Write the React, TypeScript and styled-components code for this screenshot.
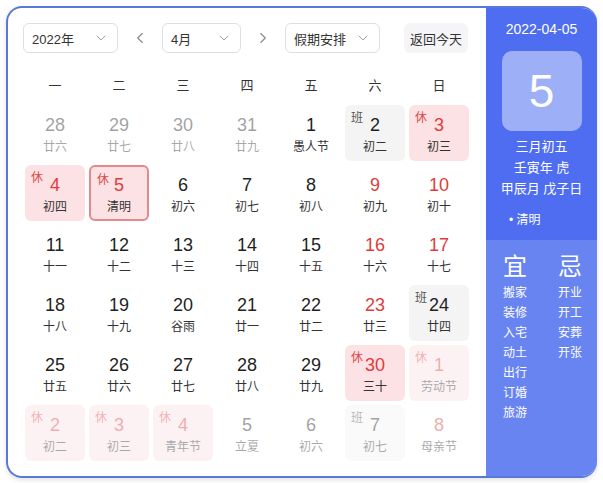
import styled, { createGlobalStyle } from "styled-components";
import { ChevronDown, ChevronLeft, ChevronRight } from "lucide-react";

const GlobalStyle = createGlobalStyle`
  body {
    margin: 0;
    background: #fff;
    font-family: "Liberation Sans", "Noto Sans CJK SC", sans-serif;
  }
`;

const Frame = styled.div`
  margin: 6px;
  width: 589px;
  height: 468px;
  border: 2px solid #5a78d8;
  border-right: none;
  border-radius: 16px;
  overflow: hidden;
  display: flex;
  box-shadow: 0 2px 5px rgba(0, 0, 0, 0.12);
`;

const Main = styled.div`
  width: 478px;
  padding: 15px 15px 0 15px;
  box-sizing: border-box;
`;

const Toolbar = styled.div`
  display: flex;
  align-items: center;
  height: 30px;
  padding-right: 3px;
  margin-bottom: 22px;
`;

const Select = styled.div<{ $w: number }>`
  width: ${(p) => p.$w}px;
  height: 30px;
  box-sizing: border-box;
  border: 1px solid #dcdfe6;
  border-radius: 6px;
  display: flex;
  align-items: center;
  justify-content: space-between;
  padding: 0 8px 0 8px;
  font-size: 13px;
  color: #333;
`;

const ArrowBtn = styled.div`
  width: 44px;
  display: flex;
  justify-content: center;
  color: #888;
`;

const TodayBtn = styled.div`
  margin-left: auto;
  height: 30px;
  padding: 0 6px;
  border-radius: 6px;
  background: #f5f5f7;
  display: flex;
  align-items: center;
  font-size: 13px;
  color: #333;
`;

const Weekdays = styled.div`
  display: grid;
  grid-template-columns: repeat(7, 64px);
  line-height: 22px;
  margin-bottom: 8px;
  font-size: 13px;
  color: #333;
  text-align: center;
`;

const Grid = styled.div`
  display: grid;
  grid-template-columns: repeat(7, 60px);
  grid-auto-rows: 56px;
  gap: 4px;
  margin: 0 2px;
`;

type Kind = "rest" | "work" | "none";

const Cell = styled.div<{ $kind: Kind; $other: boolean; $today: boolean }>`
  position: relative;
  box-sizing: border-box;
  border-radius: 6px;
  text-align: center;
  opacity: ${(p) => (p.$other ? 0.42 : 1)};
  background: ${(p) =>
    p.$kind === "rest" ? "#fce2e4" : p.$kind === "work" ? "#f4f4f5" : "transparent"};
  border: ${(p) => (p.$today ? "2px solid #e3888c" : "none")};
  padding-top: ${(p) => (p.$today ? 7 : 9)}px;
`;

const DayNum = styled.div<{ $red: boolean }>`
  font-size: 18px;
  line-height: 22px;
  color: ${(p) => (p.$red ? "#e03c3c" : "#1f1f1f")};
`;

const Lunar = styled.div`
  margin-top: 3px;
  font-size: 12px;
  line-height: 16px;
  color: #333;
`;

const Tag = styled.span<{ $kind: Kind }>`
  position: absolute;
  top: 3px;
  left: 6px;
  font-size: 12px;
  color: ${(p) => (p.$kind === "rest" ? "#e04848" : "#555")};
`;

const Side = styled.div`
  width: 111px;
  display: flex;
  flex-direction: column;
  color: #fff;
`;

const SideTop = styled.div`
  background: #4e6df1;
  padding-top: 12px;
  height: 232px;
  box-sizing: border-box;
  display: flex;
  flex-direction: column;
  align-items: center;
`;

const DateLine = styled.div`
  font-size: 14px;
  line-height: 18px;
  margin-bottom: 13px;
`;

const BigDay = styled.div`
  width: 80px;
  height: 80px;
  border-radius: 10px;
  background: rgba(255, 255, 255, 0.45);
  display: flex;
  align-items: center;
  justify-content: center;
  font-size: 46px;
  margin-bottom: 5px;
`;

const InfoLine = styled.div`
  font-size: 13px;
  line-height: 21px;
`;

const Term = styled.div`
  align-self: flex-start;
  margin: 11px 0 0 23px;
  font-size: 12px;
  line-height: 20px;
`;

const SideBottom = styled.div`
  flex: 1;
  background: #6784f1;
  padding: 13px 0 0 17px;
  display: flex;
`;

const Column = styled.div`
  width: 55px;
  flex-shrink: 0;
  display: flex;
  flex-direction: column;
`;

const ColTitle = styled.div`
  font-size: 24px;
  line-height: 28px;
  margin-bottom: 2px;
`;

const ColItem = styled.div`
  font-size: 12px;
  line-height: 20px;
`;

type Day = { d: number; l: string; tag?: Kind; other?: boolean; wk?: boolean; today?: boolean };

const rows: Day[][] = [
  [
    { d: 28, l: "廿六", other: true },
    { d: 29, l: "廿七", other: true },
    { d: 30, l: "廿八", other: true },
    { d: 31, l: "廿九", other: true },
    { d: 1, l: "愚人节" },
    { d: 2, l: "初二", tag: "work", wk: true },
    { d: 3, l: "初三", tag: "rest", wk: true },
  ],
  [
    { d: 4, l: "初四", tag: "rest" },
    { d: 5, l: "清明", tag: "rest", today: true },
    { d: 6, l: "初六" },
    { d: 7, l: "初七" },
    { d: 8, l: "初八" },
    { d: 9, l: "初九", wk: true },
    { d: 10, l: "初十", wk: true },
  ],
  [
    { d: 11, l: "十一" },
    { d: 12, l: "十二" },
    { d: 13, l: "十三" },
    { d: 14, l: "十四" },
    { d: 15, l: "十五" },
    { d: 16, l: "十六", wk: true },
    { d: 17, l: "十七", wk: true },
  ],
  [
    { d: 18, l: "十八" },
    { d: 19, l: "十九" },
    { d: 20, l: "谷雨" },
    { d: 21, l: "廿一" },
    { d: 22, l: "廿二" },
    { d: 23, l: "廿三", wk: true },
    { d: 24, l: "廿四", tag: "work", wk: true },
  ],
  [
    { d: 25, l: "廿五" },
    { d: 26, l: "廿六" },
    { d: 27, l: "廿七" },
    { d: 28, l: "廿八" },
    { d: 29, l: "廿九" },
    { d: 30, l: "三十", tag: "rest", wk: true },
    { d: 1, l: "劳动节", tag: "rest", wk: true, other: true },
  ],
  [
    { d: 2, l: "初二", tag: "rest", other: true },
    { d: 3, l: "初三", tag: "rest", other: true },
    { d: 4, l: "青年节", tag: "rest", other: true },
    { d: 5, l: "立夏", other: true },
    { d: 6, l: "初六", other: true },
    { d: 7, l: "初七", tag: "work", wk: true, other: true },
    { d: 8, l: "母亲节", wk: true, other: true },
  ],
];

const yi = ["搬家", "装修", "入宅", "动土", "出行", "订婚", "旅游"];
const ji = ["开业", "开工", "安葬", "开张"];

const App = () => {
  return (
    <>
      <GlobalStyle />
      <Frame>
        <Main>
          <Toolbar>
            <Select $w={95}>
              2022年
              <ChevronDown size={16} strokeWidth={1.4} color="#999" />
            </Select>
            <ArrowBtn>
              <ChevronLeft size={18} strokeWidth={1.5} />
            </ArrowBtn>
            <Select $w={79}>
              4月
              <ChevronDown size={16} strokeWidth={1.4} color="#999" />
            </Select>
            <ArrowBtn>
              <ChevronRight size={18} strokeWidth={1.5} />
            </ArrowBtn>
            <Select $w={95}>
              假期安排
              <ChevronDown size={16} strokeWidth={1.4} color="#999" />
            </Select>
            <TodayBtn>返回今天</TodayBtn>
          </Toolbar>
          <Weekdays>
            {["一", "二", "三", "四", "五", "六", "日"].map((w) => (
              <div key={w}>{w}</div>
            ))}
          </Weekdays>
          <Grid>
            {rows.flat().map((c, i) => {
              const kind: Kind = c.tag || "none";
              const red = kind === "rest" || (!!c.wk && kind !== "work");
              return (
                <Cell key={i} $kind={kind} $other={!!c.other} $today={!!c.today}>
                  {kind !== "none" && <Tag $kind={kind}>{kind === "rest" ? "休" : "班"}</Tag>}
                  <DayNum $red={red}>{c.d}</DayNum>
                  <Lunar>{c.l}</Lunar>
                </Cell>
              );
            })}
          </Grid>
        </Main>
        <Side>
          <SideTop>
            <DateLine>2022-04-05</DateLine>
            <BigDay>5</BigDay>
            <InfoLine>三月初五</InfoLine>
            <InfoLine>壬寅年 虎</InfoLine>
            <InfoLine>甲辰月 戊子日</InfoLine>
            <Term>• 清明</Term>
          </SideTop>
          <SideBottom>
            <Column>
              <ColTitle>宜</ColTitle>
              {yi.map((t) => (
                <ColItem key={t}>{t}</ColItem>
              ))}
            </Column>
            <Column>
              <ColTitle>忌</ColTitle>
              {ji.map((t) => (
                <ColItem key={t}>{t}</ColItem>
              ))}
            </Column>
          </SideBottom>
        </Side>
      </Frame>
    </>
  );
};

export default App;
